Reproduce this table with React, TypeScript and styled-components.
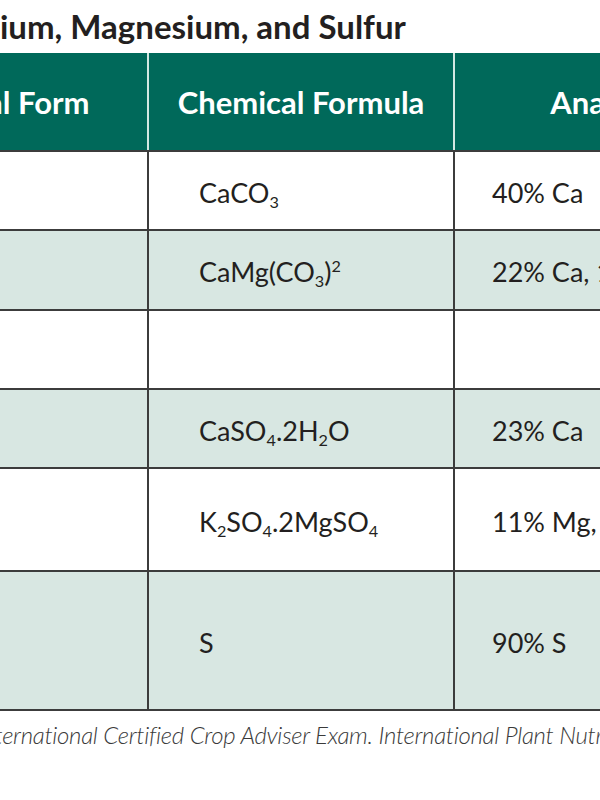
import styled, { createGlobalStyle } from 'styled-components';

const GlobalStyle = createGlobalStyle`
  html, body {
    margin: 0;
    padding: 0;
    background: #fff;
  }
  body {
    font-family: Lato, 'Open Sans', Arial, sans-serif;
    color: #231f20;
  }
`;

type Row = {
  form: string;
  formula: React.ReactNode;
  analysis: React.ReactNode;
  height: number;
  shaded?: boolean;
};

const rows: Row[] = [
  { form: '', formula: <>CaCO<sub>3</sub></>, analysis: '40% Ca', height: 79 },
  {
    form: '',
    formula: <>CaMg(CO<sub>3</sub>)<sup>2</sup></>,
    analysis: '22% Ca, 13% Mg',
    height: 80,
    shaded: true,
  },
  { form: '', formula: '', analysis: '', height: 79 },
  {
    form: '',
    formula: <>CaSO<sub>4</sub>.2H<sub>2</sub>O</>,
    analysis: '23% Ca',
    height: 79,
    shaded: true,
  },
  {
    form: '',
    formula: <>K<sub>2</sub>SO<sub>4</sub>.2MgSO<sub>4</sub></>,
    analysis: <>11% Mg, 22% S, 22% K<sub>2</sub>O</>,
    height: 103,
  },
  { form: '', formula: 'S', analysis: '90% S', height: 139, shaded: true },
];

export default function App() {
  return (
    <>
      <GlobalStyle />
      <Frame>
        <Sheet>
          <Title>Common Sources of Calcium, Magnesium, and Sulfur</Title>
          <HeadRow>
            <HeadCell>Physical Form</HeadCell>
            <HeadCell $divided>Chemical Formula</HeadCell>
            <HeadCell $divided>Analysis</HeadCell>
          </HeadRow>
          {rows.map((row, i) => (
            <BodyRow key={i} $height={row.height} $shaded={row.shaded}>
              <BodyCell>
                <CellText>{row.form}</CellText>
              </BodyCell>
              <BodyCell $divided $pad={50}>
                <CellText>{row.formula}</CellText>
              </BodyCell>
              <BodyCell $divided $pad={37}>
                <CellText>{row.analysis}</CellText>
              </BodyCell>
            </BodyRow>
          ))}
          <Source>
            Source: International Certified Crop Adviser Exam. International Plant Nutrition Institute.
          </Source>
        </Sheet>
      </Frame>
    </>
  );
}

const Frame = styled.div`
  width: 600px;
  height: 800px;
  overflow: hidden;
  background: #fff;
`;

const Sheet = styled.div`
  width: 918px;
  margin-left: -159px;
`;

const Title = styled.h1`
  margin: 0 0 0 -206px;
  padding: 7px 0 8px;
  font-size: 33px;
  line-height: 38px;
  font-weight: 700;
  white-space: nowrap;
  color: #231f20;
`;

const HeadRow = styled.div`
  display: grid;
  grid-template-columns: 306px 306px 306px;
  height: 99px;
  background: #00695a;
  border-bottom: 2px solid #3c3c3c;
  box-sizing: border-box;
`;

const HeadCell = styled.div<{ $divided?: boolean }>`
  display: flex;
  align-items: center;
  justify-content: center;
  color: #fff;
  font-size: 31px;
  font-weight: 700;
  white-space: nowrap;
  border-left: ${(p) => (p.$divided ? '2px solid #d3e8e2' : 'none')};
`;

const BodyRow = styled.div<{ $height: number; $shaded?: boolean }>`
  display: grid;
  grid-template-columns: 306px 306px 306px;
  height: ${(p) => p.$height}px;
  box-sizing: border-box;
  background: ${(p) => (p.$shaded ? '#d8e7e2' : '#fff')};
  border-bottom: 2px solid #3c3c3c;
`;

const BodyCell = styled.div<{ $divided?: boolean; $pad?: number }>`
  display: flex;
  align-items: center;
  box-sizing: border-box;
  padding: 3px 0 0 ${(p) => p.$pad ?? 0}px;
  border-left: ${(p) => (p.$divided ? '2px solid #3c3c3c' : 'none')};
`;

const CellText = styled.span`
  font-size: 27px;
  font-weight: 400;
  white-space: nowrap;
  color: #231f20;

  sub,
  sup {
    font-size: 0.6em;
    line-height: 0;
  }
  sub {
    vertical-align: -0.3em;
  }
  sup {
    vertical-align: 0.6em;
  }
`;

const Source = styled.p`
  margin: 0;
  padding: 9px 0 0 61px;
  font-size: 24px;
  line-height: 29px;
  font-weight: 300;
  font-style: italic;
  letter-spacing: -0.3px;
  white-space: nowrap;
  color: #3a3a3a;
`;
